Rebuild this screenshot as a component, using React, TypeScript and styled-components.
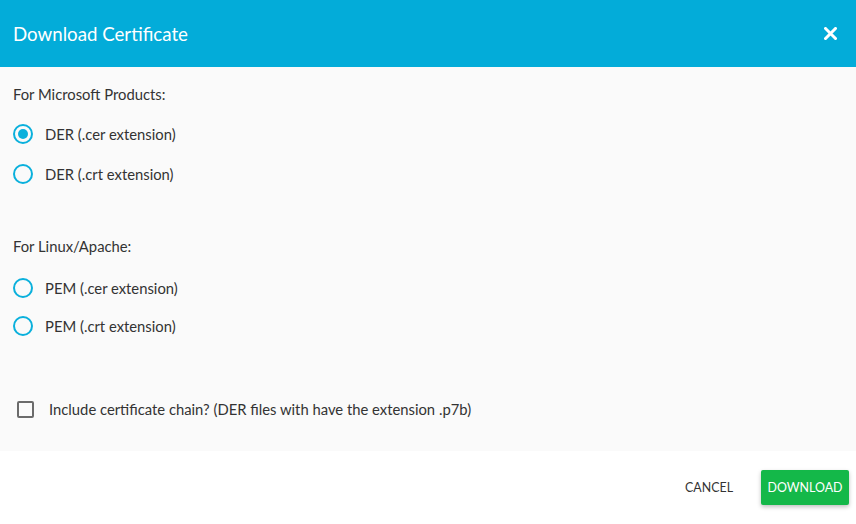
import React, { useState } from 'react';
import styled, { createGlobalStyle } from 'styled-components';

const GlobalStyle = createGlobalStyle`
  html, body {
    margin: 0;
    padding: 0;
    background: #ffffff;
  }
  body {
    font-family: Lato, "Open Sans", sans-serif;
    color: #333333;
  }
`;

const Dialog = styled.div`
  width: 856px;
  height: 524px;
  display: flex;
  flex-direction: column;
  background: #ffffff;
`;

const Header = styled.div`
  height: 67px;
  flex-shrink: 0;
  display: flex;
  align-items: center;
  justify-content: space-between;
  padding: 0 18px 0 13px;
  background: #03acd9;
  color: #ffffff;
`;

const Title = styled.h1`
  margin: 0;
  font-size: 18.7px;
  font-weight: 400;
`;

const CloseButton = styled.button`
  border: none;
  background: none;
  padding: 0;
  width: 16px;
  height: 16px;
  display: flex;
  align-items: center;
  justify-content: center;
  cursor: pointer;
`;

const Body = styled.div`
  height: 384px;
  flex-shrink: 0;
  background: #fafafa;
  padding: 18px 13px 0 13px;
  box-sizing: border-box;
  display: flex;
  flex-direction: column;
`;

const Section = styled.div<{ $gap: number }>`
  display: flex;
  flex-direction: column;
  margin-bottom: ${(p) => p.$gap}px;
`;

const SectionLabel = styled.div<{ $space: number }>`
  font-size: 14.8px;
  line-height: 18px;
  color: #333333;
  margin-bottom: ${(p) => p.$space}px;
`;

const RadioRow = styled.label<{ $h: number }>`
  display: flex;
  align-items: center;
  height: ${(p) => p.$h}px;
  gap: 12px;
  font-size: 14.8px;
  color: #333333;
  cursor: pointer;
`;

const RadioCircle = styled.span<{ $checked: boolean }>`
  width: 20px;
  height: 20px;
  box-sizing: border-box;
  border: 2px solid #0ab0dc;
  border-radius: 50%;
  display: flex;
  align-items: center;
  justify-content: center;

  &::after {
    content: '';
    width: 10px;
    height: 10px;
    border-radius: 50%;
    background: #0ab0dc;
    display: ${(p) => (p.$checked ? 'block' : 'none')};
  }
`;

const CheckRow = styled.label`
  display: flex;
  align-items: center;
  height: 18px;
  gap: 15px;
  padding-left: 4px;
  font-size: 14.8px;
  color: #333333;
  cursor: pointer;
`;

const CheckBox = styled.span<{ $checked: boolean }>`
  width: 17px;
  height: 17px;
  box-sizing: border-box;
  border: 2px solid #6b6b6b;
  border-radius: 2px;
  background: ${(p) => (p.$checked ? '#6b6b6b' : 'transparent')};
`;

const Footer = styled.div`
  flex: 1;
  display: flex;
  align-items: center;
  justify-content: flex-end;
  gap: 28px;
  padding: 0 7px 0 0;
`;

const TextButton = styled.button`
  border: none;
  background: none;
  font-family: Lato, "Open Sans", sans-serif;
  font-size: 12.4px;
  color: #333333;
  padding: 0;
  cursor: pointer;
`;

const PrimaryButton = styled.button`
  border: none;
  border-radius: 2px;
  background: #14b849;
  color: #ffffff;
  font-family: Lato, "Open Sans", sans-serif;
  font-size: 12.4px;
  padding: 0;
  width: 88px;
  height: 35px;
  box-shadow: 0 2px 4px rgba(0, 0, 0, 0.25);
  cursor: pointer;
`;

const microsoft = [
  { id: 'der-cer', label: 'DER (.cer extension)' },
  { id: 'der-crt', label: 'DER (.crt extension)' },
];

const linux = [
  { id: 'pem-cer', label: 'PEM (.cer extension)' },
  { id: 'pem-crt', label: 'PEM (.crt extension)' },
];

export default function App() {
  const [format, setFormat] = useState('der-cer');
  const [chain, setChain] = useState(false);

  return (
    <>
      <GlobalStyle />
      <Dialog>
        <Header>
          <Title>Download Certificate</Title>
          <CloseButton aria-label="close">
            <svg width="13" height="13" viewBox="0 0 13 13">
              <path d="M1.5 1.5 L11.5 11.5 M11.5 1.5 L1.5 11.5" stroke="#fff" strokeWidth="3" strokeLinecap="square" />
            </svg>
          </CloseButton>
        </Header>
        <Body>
          <Section $gap={43}>
            <SectionLabel $space={11}>For Microsoft Products:</SectionLabel>
            {microsoft.map((o) => (
              <RadioRow key={o.id} $h={40} onClick={() => setFormat(o.id)}>
                <RadioCircle $checked={format === o.id} />
                {o.label}
              </RadioRow>
            ))}
          </Section>
          <Section $gap={55}>
            <SectionLabel $space={14}>For Linux/Apache:</SectionLabel>
            {linux.map((o) => (
              <RadioRow key={o.id} $h={38} onClick={() => setFormat(o.id)}>
                <RadioCircle $checked={format === o.id} />
                {o.label}
              </RadioRow>
            ))}
          </Section>
          <CheckRow onClick={() => setChain(!chain)}>
            <CheckBox $checked={chain} />
            Include certificate chain? (DER files with have the extension .p7b)
          </CheckRow>
        </Body>
        <Footer>
          <TextButton>CANCEL</TextButton>
          <PrimaryButton>DOWNLOAD</PrimaryButton>
        </Footer>
      </Dialog>
    </>
  );
}
